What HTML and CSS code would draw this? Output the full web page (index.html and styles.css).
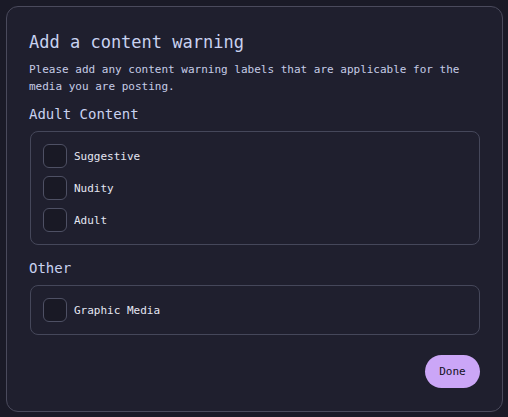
FILE: index.html
```html
<!DOCTYPE html>
<html>
<head>
<meta charset="utf-8">
<link rel="stylesheet" href="styles.css">
</head>
<body>
<div class="dialog">
  <h1 class="title">Add a content warning</h1>
  <p class="desc">Please add any content warning labels that are applicable for the media you are posting.</p>
  <h2 class="section">Adult Content</h2>
  <div class="group">
    <label class="row"><span class="box"></span><span class="label">Suggestive</span></label>
    <label class="row"><span class="box"></span><span class="label">Nudity</span></label>
    <label class="row"><span class="box"></span><span class="label">Adult</span></label>
  </div>
  <h2 class="section other">Other</h2>
  <div class="group">
    <label class="row"><span class="box"></span><span class="label">Graphic Media</span></label>
  </div>
  <div class="actions">
    <button class="done">Done</button>
  </div>
</div>
</body>
</html>
```
FILE: styles.css
```css
html, body {
  margin: 0;
  padding: 0;
  background: #1a1a27;
  font-family: "DejaVu Sans Mono", "Liberation Mono", monospace;
  color: #cdd6f4;
}
body {
  padding: 6px 5px 0 6px;
  height: 417px;
  box-sizing: border-box;
}
.dialog {
  box-sizing: border-box;
  width: 497px;
  background: #1f1f2e;
  border: 1px solid #4a4a5c;
  border-radius: 12px;
  padding: 24px 22px 23px 22px;
}
.title {
  margin: 0;
  font-size: 17px;
  font-weight: normal;
  line-height: 22px;
  color: #c9d2f0;
}
.desc {
  margin: 8px 0 0 0;
  font-size: 11px;
  line-height: 17px;
  color: #c6cce6;
}
.section {
  margin: 9px 0 7px 0;
  font-size: 14px;
  font-weight: normal;
  line-height: 20px;
  color: #c9d2f0;
}
.section.other {
  margin-top: 13px;
}
.group {
  border: 1px solid #45475a;
  border-radius: 8px;
  padding: 12px;
  margin: 0 0 0 1px;
  display: flex;
  flex-direction: column;
  gap: 8px;
}
.row {
  display: flex;
  align-items: center;
  gap: 7px;
  height: 24px;
}
.box {
  box-sizing: border-box;
  width: 24px;
  height: 24px;
  border: 1px solid #4e5064;
  border-radius: 6px;
  background: #191925;
}
.label {
  font-size: 11px;
  color: #e4e6f2;
}
.actions {
  display: flex;
  justify-content: flex-end;
  margin-top: 20px;
}
.done {
  width: 55px;
  height: 33px;
  border: none;
  border-radius: 17px;
  background: #cba6f7;
  color: #11111b;
  font-family: "DejaVu Sans Mono", monospace;
  font-size: 11px;
  padding: 0;
}
```
